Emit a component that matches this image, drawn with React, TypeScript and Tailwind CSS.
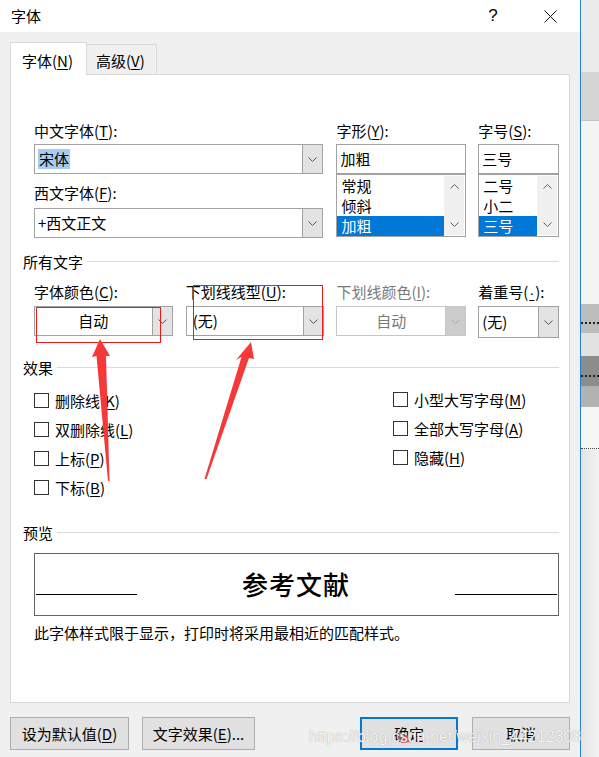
import React from "react"

const cjk = "font-['Noto_Sans_CJK_SC',sans-serif]"

const Chevron = ({ up = false, color = "#555555" }: { up?: boolean; color?: string }) => (
  <svg width="9" height="5" viewBox="0 0 9 5" className="block">
    <polyline
      points={up ? "0.5,4.5 4.5,0.5 8.5,4.5" : "0.5,0.5 4.5,4.5 8.5,0.5"}
      fill="none"
      stroke={color}
      strokeWidth="1"
    />
  </svg>
)

// accelerator letter, underlined like in the Win32 dialog
const Acc = ({ children, className = "" }: { children: React.ReactNode; className?: string }) => (
  <span className={`underline decoration-1 underline-offset-[2px] ${className}`}>{children}</span>
)

interface FieldLabelProps {
  pre: string
  acc: string
  post?: string
  disabled?: boolean
  accClass?: string
}

const FieldLabel = ({ pre, acc, post = "):", disabled = false, accClass = "" }: FieldLabelProps) => (
  <div className={`h-[20px] leading-[20px] whitespace-nowrap ${disabled ? "text-[#7a7a7a]" : ""}`}>
    {pre}
    <Acc className={accClass}>{acc}</Acc>
    {post}
  </div>
)

interface ComboProps {
  children: React.ReactNode
  className?: string
  disabled?: boolean
  center?: boolean
  pad?: string
}

const Combo = ({ children, className = "", disabled = false, center = false, pad = "pl-[3px]" }: ComboProps) => (
  <div
    className={`flex bg-white border ${disabled ? "border-[#c6c6c6] text-[#7a7a7a]" : "border-[#a2a2a2]"} ${className}`}
  >
    <div className={`flex-1 flex items-center ${center ? "justify-center" : pad}`}>{children}</div>
    <div
      className={`w-[20px] flex items-center justify-center border-l ${
        disabled ? "bg-[#cccccc] border-[#c6c6c6]" : "bg-[#e3e3e3] border-[#a2a2a2]"
      }`}
    >
      <Chevron color={disabled ? "#a8a8a8" : "#555555"} />
    </div>
  </div>
)

const ListBox = ({ items, selected }: { items: string[]; selected: string }) => (
  <div className="flex h-[63px] border border-[#a2a2a2] bg-white">
    <div className="flex-1 flex flex-col pt-[1px]">
      {items.map((item) => (
        <div
          key={item}
          className={`h-[20px] leading-[20px] pl-[4px] ${item === selected ? "bg-[#0078d7] text-white" : ""}`}
        >
          {item}
        </div>
      ))}
    </div>
    <div className="w-[20px] my-[1px] mr-[1px] bg-[#f0f0f0] flex flex-col items-center justify-between py-[8px]">
      <Chevron up color="#606060" />
      <Chevron color="#606060" />
    </div>
  </div>
)

const SectionHead = ({ title }: { title: string }) => (
  <div className="flex items-center gap-[4px] h-[20px]">
    <span className="leading-[20px] whitespace-nowrap">{title}</span>
    <div className="flex-1 h-px bg-[#dadada] -mt-[2px]" />
  </div>
)

const CheckRow = ({ pre, acc }: { pre: string; acc: string }) => (
  <div className="h-[29px] flex items-center gap-[6px]">
    <div className="w-[15px] h-[15px] border border-[#333333] bg-white" />
    <span className="leading-[20px] whitespace-nowrap">
      {pre}
      <Acc>{acc}</Acc>)
    </span>
  </div>
)

const DlgButton = ({ children, className = "" }: { children: React.ReactNode; className?: string }) => (
  <button className={`h-[33px] bg-[#e1e1e1] text-[15px] leading-[20px] text-black ${className}`}>{children}</button>
)

const RightStrip = () => (
  <div className="w-[18px] h-[757px] flex flex-col">
    <div className="h-[72px] bg-[#ebebeb]" />
    <div className="h-[49px] bg-[#d6d6d6] border-b border-[#c4c4c4]" />
    <div className="h-[183px] bg-[#f4f4f4]" />
    <div className="h-[29px] bg-[#bcbcbc] flex items-end pb-[9px]">
      <div className="w-full border-t-2 border-dotted border-[#222]" />
    </div>
    <div className="h-[23px] bg-[#e2e2e2]" />
    <div className="h-[30px] bg-[#8c8c8c] flex items-end pb-[9px]">
      <div className="w-full border-t-2 border-dotted border-[#222]" />
    </div>
    <div className="h-[21px] bg-[#b2b2b2]" />
    <div className="h-[42px] bg-[#f6f6f6] flex items-end">
      <div className="w-full border-t border-dotted border-[#444]" />
    </div>
    <div className="flex-1 bg-gradient-to-r from-[#e4e4e4] to-[#f2f2f2]" />
  </div>
)

const Annotations = () => (
  <svg className="absolute left-0 top-0 pointer-events-none" width="599" height="757" viewBox="0 0 599 757">
    <rect x="36.5" y="307.5" width="124" height="35" fill="none" stroke="#f01818" strokeWidth="1" />
    <rect x="193.5" y="285.5" width="129" height="54" fill="none" stroke="#f01818" strokeWidth="1" />
    <polygon points="100,339 110,356 106,356 109.5,481 108,481 96.5,356 92,357" fill="#f73838" />
    <polygon points="251,342 254,359 249,358 206.5,479 204.5,479 241.5,357 236,360" fill="#f73838" />
    <polygon points="406,733 401,743 411,742" fill="#f73838" />
  </svg>
)

export default function App() {
  return (
    <div className={`relative w-[599px] h-[757px] overflow-hidden flex bg-[#f0f0f0] text-[15px] text-black ${cjk}`}>
      <div className="w-[580px] h-[757px] flex flex-col">
        {/* title bar */}
        <div className="h-[32px] bg-white flex items-center">
          <span className="pl-[11px] leading-[20px]">字体</span>
          <div className="ml-auto mr-[7px] flex items-center gap-[11px]">
            <div className="w-[46px] h-[32px] flex items-center justify-center font-['Liberation_Sans',sans-serif] text-[17px]">
              ?
            </div>
            <div className="w-[46px] h-[32px] flex items-center justify-center">
              <svg width="13" height="13" viewBox="0 0 13 13">
                <path d="M0.5 0.5 L12.5 12.5 M12.5 0.5 L0.5 12.5" stroke="#111" strokeWidth="1" fill="none" />
              </svg>
            </div>
          </div>
        </div>

        <div className="flex-1 flex flex-col px-[10px]">
          {/* tabs */}
          <div className="mt-[10px] h-[32px] flex items-end">
            <div className="relative z-10 w-[77px] h-[33px] -mb-px bg-white border border-b-0 border-[#d9d9d9] pl-[11px] pt-[8px] leading-[20px]">
              字体(<Acc>N</Acc>)
            </div>
            <div className="w-[70px] h-[30px] border-t border-r border-[#d9d9d9] pl-[9px] pt-[6px] leading-[20px]">
              高级(<Acc>V</Acc>)
            </div>
          </div>

          {/* tab panel */}
          <div className="h-[629px] bg-white border border-[#d9d9d9] pl-[12px] pr-[10px] pt-[46px] flex flex-col">
            <div className="ml-[11px] flex">
              <div className="w-[290px] mr-[13px] flex flex-col">
                <FieldLabel pre="中文字体(" acc="T" />
                <Combo className="mt-[3px] h-[30px]">
                  <span className="bg-[#a6cdf0] leading-[20px] px-[1px]">宋体</span>
                </Combo>
                <div className="mt-[9px]">
                  <FieldLabel pre="西文字体(" acc="F" />
                </div>
                <Combo className="mt-[5px] h-[30px]">
                  <span className="leading-[20px]">+西文正文</span>
                </Combo>
              </div>
              <div className="w-[130px] mr-[12px] flex flex-col">
                <FieldLabel pre="字形(" acc="Y" />
                <div className="mt-[3px] h-[30px] border border-[#a2a2a2] bg-white pl-[3px] flex items-center">加粗</div>
                <ListBox items={["常规", "倾斜", "加粗"]} selected="加粗" />
              </div>
              <div className="w-[81px] flex flex-col">
                <FieldLabel pre="字号(" acc="S" />
                <div className="mt-[3px] h-[30px] border border-[#a2a2a2] bg-white pl-[3px] flex items-center">三号</div>
                <ListBox items={["二号", "小二", "三号"]} selected="三号" />
              </div>
            </div>

            <div className="mt-[14px]">
              <SectionHead title="所有文字" />
            </div>

            <div className="ml-[11px] mt-[10px] flex">
              <div className="w-[139px] mr-[13px] flex flex-col">
                <FieldLabel pre="字体颜色(" acc="C" />
                <Combo className="mt-[4px] h-[30px]" center>
                  自动
                </Combo>
              </div>
              <div className="w-[139px] mr-[12px] flex flex-col">
                <FieldLabel pre="下划线线型(" acc="U" />
                <Combo className="mt-[4px] h-[30px]" pad="pl-[6px]">
                  (无)
                </Combo>
              </div>
              <div className="w-[130px] mr-[12px] flex flex-col">
                <FieldLabel pre="下划线颜色(" acc="I" disabled />
                <Combo className="mt-[4px] h-[30px]" disabled center>
                  自动
                </Combo>
              </div>
              <div className="w-[81px] flex flex-col">
                <FieldLabel pre="着重号(" acc="·" accClass="font-['Liberation_Sans',sans-serif] px-[1px]" />
                <Combo className="mt-[4px] h-[32px]" pad="pl-[3px]">
                  (无)
                </Combo>
              </div>
            </div>

            <div className="mt-[20px]">
              <SectionHead title="效果" />
            </div>

            <div className="ml-[11px] mt-[8px] flex">
              <div className="w-[359px] flex flex-col">
                <CheckRow pre="删除线(" acc="K" />
                <CheckRow pre="双删除线(" acc="L" />
                <CheckRow pre="上标(" acc="P" />
                <CheckRow pre="下标(" acc="B" />
              </div>
              <div className="flex flex-col -mt-[1px]">
                <CheckRow pre="小型大写字母(" acc="M" />
                <CheckRow pre="全部大写字母(" acc="A" />
                <CheckRow pre="隐藏(" acc="H" />
              </div>
            </div>

            <div className="mt-[21px]">
              <SectionHead title="预览" />
            </div>

            <div className="ml-[11px] mt-[10px] h-[63px] border border-[#646464] flex px-[1px]">
              <div className="w-[101px] h-px bg-black mt-[40px]" />
              <div className="flex-1 text-center text-[26px] leading-[34px] pt-[13px] font-medium tracking-[1px]">
                参考文献
              </div>
              <div className="w-[102px] h-px bg-black mt-[40px]" />
            </div>

            <div className="ml-[11px] mt-[7px] leading-[20px]">
              此字体样式限于显示，打印时将采用最相近的匹配样式。
            </div>
          </div>

          {/* buttons */}
          <div className="mt-[14px] flex">
            <DlgButton className="w-[119px] border border-[#adadad]">
              设为默认值(<Acc>D</Acc>)
            </DlgButton>
            <DlgButton className="w-[113px] ml-[13px] border border-[#adadad]">
              文字效果(<Acc>E</Acc>)...
            </DlgButton>
            <DlgButton className="w-[98px] ml-auto border-2 border-[#0078d7]">确定</DlgButton>
            <DlgButton className="w-[98px] ml-[14px] border border-[#adadad]">取消</DlgButton>
          </div>
        </div>
      </div>
      <div className="w-px h-[757px] bg-[#1e82d7]" />
      <RightStrip />

      <Annotations />
      <div className="absolute left-[309px] top-[727px] text-[16px] leading-[20px] whitespace-nowrap font-['Liberation_Sans',sans-serif] text-white/90 [text-shadow:0_0_1px_#8a8a8a] pointer-events-none">
        https://blog.csdn.net/weixin_44212308
      </div>
    </div>
  )
}
